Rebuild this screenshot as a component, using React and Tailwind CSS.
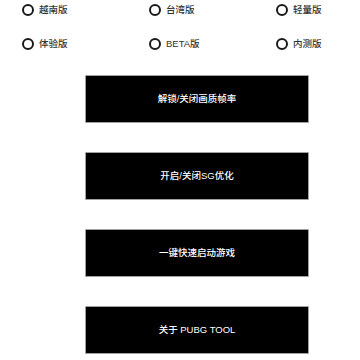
export default function App() {
  const rows = [
    ["越南版", "台湾版", "轻量版"],
    ["体验版", "BETA版", "内测版"],
  ];
  const buttons = ["解锁/关闭画质帧率", "开启/关闭SG优化", "一键快速启动游戏", "关于 PUBG TOOL"];
  return (
    <div
      className="w-[360px] h-[360px] bg-white overflow-hidden"
      style={{ fontFamily: '"Liberation Sans", "Noto Sans CJK SC", sans-serif' }}
    >
      <div className="flex flex-col gap-[14px] pl-[22px]">
        {rows.map((r, i) => (
          <div key={i} className="grid grid-cols-[127px_127px_127px] h-[20px]">
            {r.map((t) => (
              <div key={t} className="flex items-center gap-[5px]">
                <span className="w-[12px] h-[12px] rounded-full border-[2px] border-[#1a1a1a]" />
                <span className="text-[9.5px] leading-none text-[#333] font-medium">{t}</span>
              </div>
            ))}
          </div>
        ))}
      </div>
      <div className="flex flex-col gap-[29px] ml-[85px] mt-[21px]">
        {buttons.map((b) => (
          <div
            key={b}
            className="w-[224px] h-[48px] bg-black border border-[#a0a0a0] rounded-[1px] flex items-center justify-center text-white text-[9.5px] font-medium"
          >
            {b}
          </div>
        ))}
      </div>
    </div>
  );
}
